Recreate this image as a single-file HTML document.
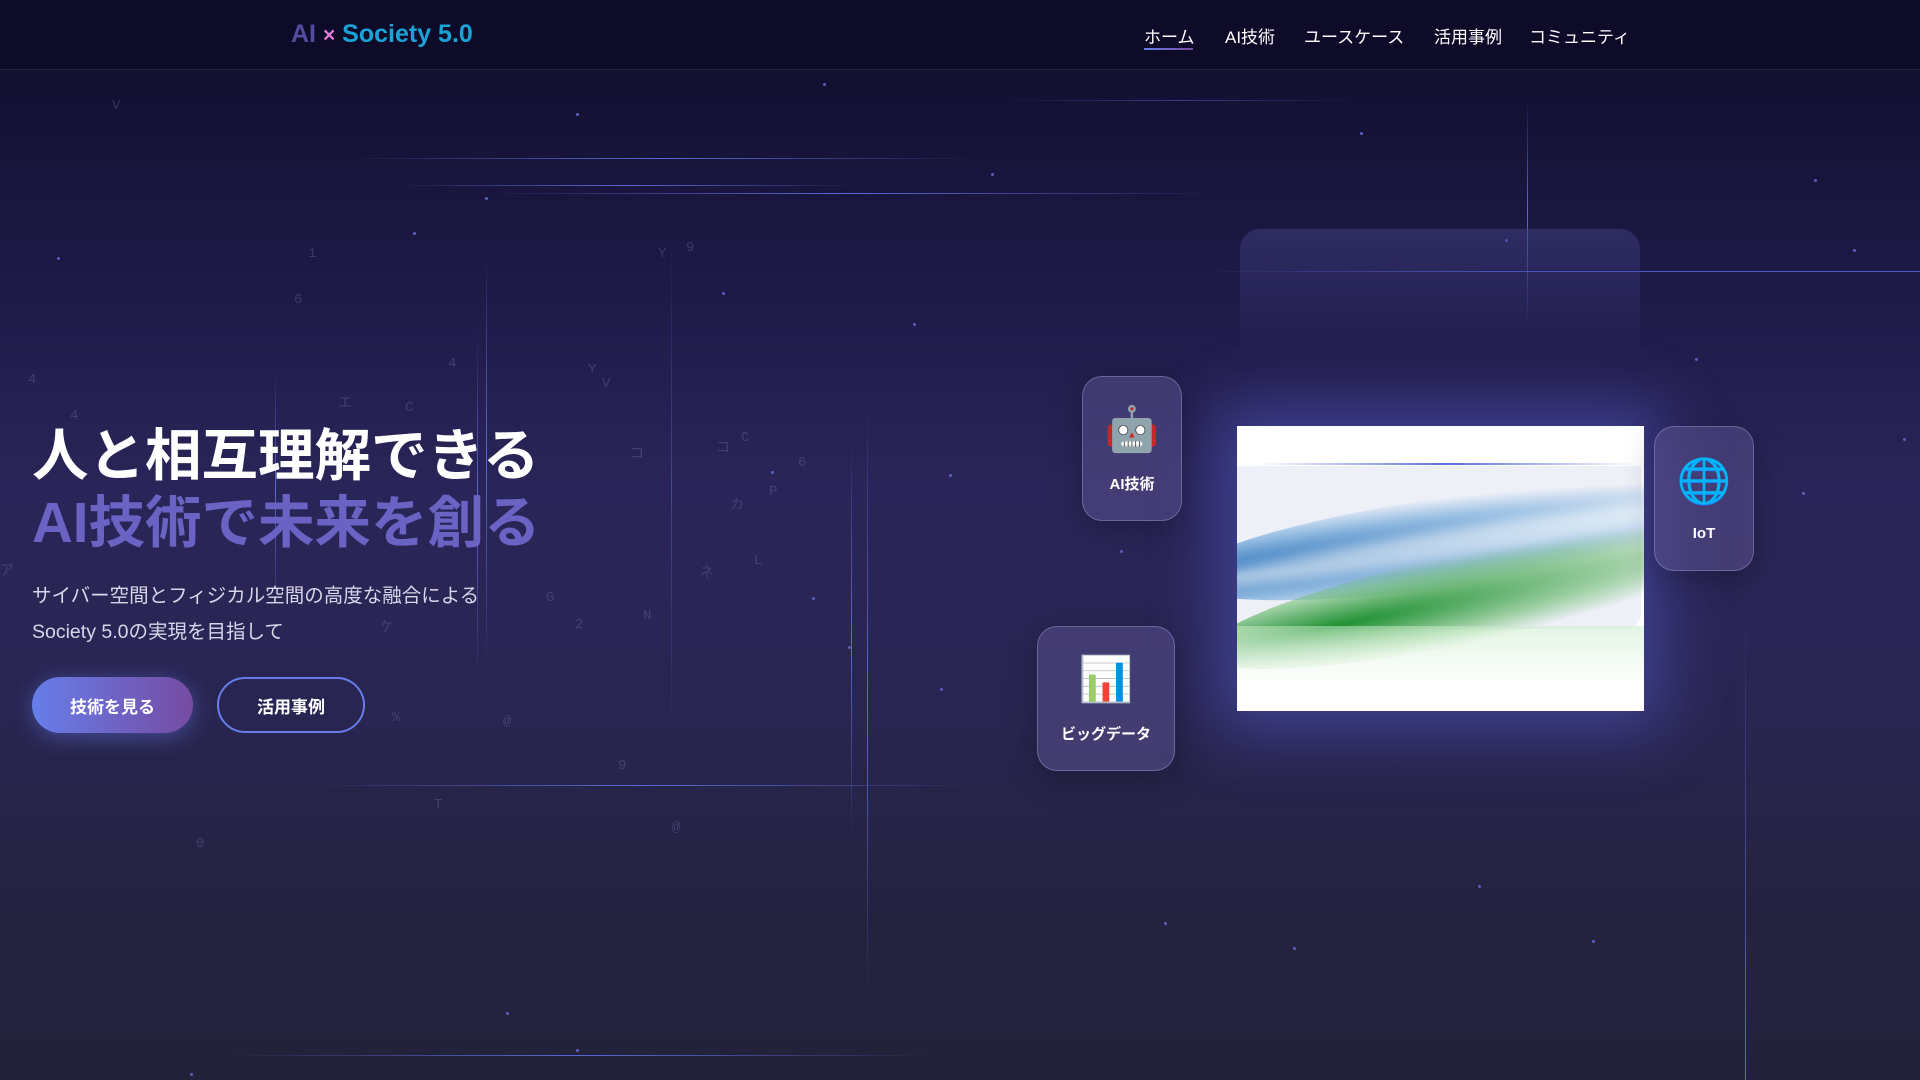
<!DOCTYPE html>
<html><head><meta charset="utf-8"><style>
*{margin:0;padding:0;box-sizing:border-box}
body{width:1920px;height:1080px;overflow:hidden;font-family:"Liberation Sans","Noto Sans CJK JP",sans-serif;background:linear-gradient(180deg,#0f0c29 0%,#1d1946 25%,#2a2558 45%,#292552 65%,#24223f 85%,#23223a 100%);position:relative;color:#fff}
nav{position:absolute;left:0;top:0;width:1920px;height:70px;background:#0e0b28;border-bottom:1px solid #26243d}
.logo{position:absolute;left:291px;top:20px;font-size:25px;font-weight:bold;color:#1aa3d6}
.logo .ai{color:#564aa0}.logo .x{color:#e27ad8;font-size:21px}
.nav a{position:absolute;top:23px;font-size:17px;color:#fff;text-decoration:none}
.ul{position:absolute;left:1144px;top:48px;width:49px;height:2px;background:linear-gradient(90deg,#667eea,#764ba2)}
.h{position:absolute;left:32px;font-size:56.5px;font-weight:bold;white-space:nowrap}
.sub{position:absolute;left:32px;font-size:19.5px;color:#d8d6ea}
.btn{position:absolute;top:677px;height:56px;border-radius:28px;font-size:17px;font-weight:bold;display:flex;align-items:center;justify-content:center}
.l{position:absolute;background:linear-gradient(90deg,transparent,#5b68d8,transparent);height:1px}
.v{position:absolute;background:linear-gradient(180deg,transparent,#5b68d8,transparent);width:1px}
.card{position:absolute;border-radius:20px;background:rgba(90,80,140,.55);border:1px solid rgba(160,150,210,.45);display:flex;flex-direction:column;align-items:center;justify-content:center;font-size:15px;font-weight:bold;box-shadow:0 8px 30px rgba(0,0,0,.25)}
.card .i{font-size:44px;margin-bottom:18px;font-family:"DejaVu Sans",sans-serif}
.d{position:absolute;width:3px;height:3px;border-radius:50%;background:#5b5fc0}
.ch{position:absolute;color:rgba(120,115,180,.35);font-size:14px;font-family:"Liberation Mono","Noto Sans CJK JP",monospace}
</style></head><body>
<div class="l" style="left:343px;top:158px;width:637px"></div>
<div class="l" style="left:392px;top:185px;width:470px"></div>
<div class="l" style="left:480px;top:193px;width:740px"></div>
<div class="l" style="left:1000px;top:100px;width:360px;opacity:.5"></div>
<div class="l" style="left:1200px;top:271px;width:720px;background:linear-gradient(90deg,transparent,#4a58c8 40%,#4a58c8)"></div>
<div class="l" style="left:306px;top:785px;width:674px"></div>
<div class="l" style="left:230px;top:1055px;width:700px"></div>
<div class="v" style="left:486px;top:250px;height:420px"></div>
<div class="v" style="left:477px;top:330px;height:350px"></div>
<div class="v" style="left:275px;top:370px;height:240px"></div>
<div class="v" style="left:671px;top:240px;height:500px;opacity:.5"></div>
<div class="v" style="left:867px;top:400px;height:600px"></div>
<div class="v" style="left:851px;top:440px;height:400px"></div>
<div class="v" style="left:1527px;top:100px;height:225px"></div>
<div class="v" style="left:1745px;top:600px;height:480px;background:linear-gradient(180deg,transparent,#5b68d8)"></div>
<div class="d" style="left:576px;top:113px"></div><div class="d" style="left:823px;top:83px"></div><div class="d" style="left:991px;top:173px"></div><div class="d" style="left:57px;top:257px"></div><div class="d" style="left:413px;top:232px"></div><div class="d" style="left:485px;top:197px"></div><div class="d" style="left:722px;top:292px"></div><div class="d" style="left:913px;top:323px"></div><div class="d" style="left:949px;top:474px"></div><div class="d" style="left:771px;top:471px"></div><div class="d" style="left:812px;top:597px"></div><div class="d" style="left:848px;top:646px"></div><div class="d" style="left:1120px;top:550px"></div><div class="d" style="left:1360px;top:132px"></div><div class="d" style="left:1505px;top:239px"></div><div class="d" style="left:1695px;top:358px"></div><div class="d" style="left:1853px;top:249px"></div><div class="d" style="left:1814px;top:179px"></div><div class="d" style="left:1802px;top:492px"></div><div class="d" style="left:1903px;top:438px"></div><div class="d" style="left:1164px;top:922px"></div><div class="d" style="left:1293px;top:947px"></div><div class="d" style="left:1478px;top:885px"></div><div class="d" style="left:1592px;top:940px"></div><div class="d" style="left:576px;top:1049px"></div><div class="d" style="left:506px;top:1012px"></div><div class="d" style="left:190px;top:1073px"></div><div class="d" style="left:940px;top:688px"></div>
<div class="ch" style="left:112px;top:98px">V</div><div class="ch" style="left:308px;top:246px">1</div><div class="ch" style="left:294px;top:292px">6</div><div class="ch" style="left:658px;top:246px">Y</div><div class="ch" style="left:686px;top:240px">9</div><div class="ch" style="left:28px;top:372px">4</div><div class="ch" style="left:70px;top:408px">4</div><div class="ch" style="left:448px;top:356px">4</div><div class="ch" style="left:588px;top:362px">Y</div><div class="ch" style="left:602px;top:376px">V</div><div class="ch" style="left:338px;top:392px">エ</div><div class="ch" style="left:405px;top:400px">C</div><div class="ch" style="left:630px;top:443px">コ</div><div class="ch" style="left:716px;top:437px">コ</div><div class="ch" style="left:741px;top:430px">C</div><div class="ch" style="left:798px;top:455px">6</div><div class="ch" style="left:730px;top:494px">カ</div><div class="ch" style="left:769px;top:484px">P</div><div class="ch" style="left:754px;top:553px">L</div><div class="ch" style="left:700px;top:562px">ネ</div><div class="ch" style="left:546px;top:590px">G</div><div class="ch" style="left:575px;top:617px">2</div><div class="ch" style="left:643px;top:608px">N</div><div class="ch" style="left:380px;top:616px">ケ</div><div class="ch" style="left:392px;top:710px">%</div><div class="ch" style="left:503px;top:714px">@</div><div class="ch" style="left:618px;top:758px">9</div><div class="ch" style="left:434px;top:797px">T</div><div class="ch" style="left:672px;top:820px">@</div><div class="ch" style="left:196px;top:836px">0</div><div class="ch" style="left:0px;top:560px">ア</div>
<nav>
<div class="logo"><span class="ai">AI</span> <span class="x">×</span> Society 5.0</div>
<div class="nav"><a style="left:1144px">ホーム</a><a style="left:1225px">AI技術</a><a style="left:1304px">ユースケース</a><a style="left:1434px">活用事例</a><a style="left:1529px">コミュニティ</a></div>
<div class="ul"></div>
</nav>
<div class="h" style="top:410px">人と相互理解できる</div>
<div class="h" style="top:477px;color:#6a63c4">AI技術で未来を創る</div>
<div class="sub" style="top:579px">サイバー空間とフィジカル空間の高度な融合による</div>
<div class="sub" style="top:615px">Society 5.0の実現を目指して</div>
<div class="btn" style="left:32px;width:161px;background:linear-gradient(90deg,#667eea,#764ba2);box-shadow:0 4px 22px rgba(102,126,234,.45)">技術を見る</div>
<div class="btn" style="left:217px;width:148px;border:2px solid #667eea">活用事例</div>
<div style="position:absolute;left:1240px;top:229px;width:400px;height:130px;border-radius:20px;background:linear-gradient(180deg,rgba(70,70,140,.45),rgba(70,70,140,0))"></div>
<div style="position:absolute;left:1237px;top:426px;width:407px;height:285px;background:#fff;box-shadow:0 0 60px 20px rgba(90,100,220,.45);overflow:hidden">
<div style="position:absolute;left:20px;top:37px;width:380px;height:2px;background:linear-gradient(90deg,transparent,#5b6ee0,transparent)"></div>
<div style="position:absolute;left:0;top:40px;width:404px;height:163px;border-radius:0 0 16px 0;background:#eef0f8"></div>
<div style="position:absolute;left:-60px;top:70px;width:560px;height:90px;border-radius:50%;transform:rotate(-8deg);background:radial-gradient(ellipse at 20% 50%,rgba(20,100,180,.95),rgba(80,150,210,.5) 50%,transparent 75%)"></div>
<div style="position:absolute;left:-40px;top:125px;width:560px;height:90px;border-radius:50%;transform:rotate(-12deg);background:radial-gradient(ellipse at 25% 50%,rgba(20,140,40,.95),rgba(90,180,90,.5) 50%,transparent 75%)"></div>
<div style="position:absolute;left:-50px;top:100px;width:560px;height:30px;border-radius:50%;transform:rotate(-9deg);background:rgba(255,255,255,.6);filter:blur(6px)"></div>
<div style="position:absolute;left:0;top:200px;width:407px;height:85px;background:linear-gradient(180deg,rgba(200,235,200,.5),#fff 70%)"></div>
</div>
<div class="card" style="left:1082px;top:376px;width:100px;height:145px"><div class="i">🤖</div>AI技術</div>
<div class="card" style="left:1654px;top:426px;width:100px;height:145px"><div class="i" style="color:#0aa0f0">🌐</div>IoT</div>
<div class="card" style="left:1037px;top:626px;width:138px;height:145px"><div class="i">📊</div>ビッグデータ</div>
</body></html>
